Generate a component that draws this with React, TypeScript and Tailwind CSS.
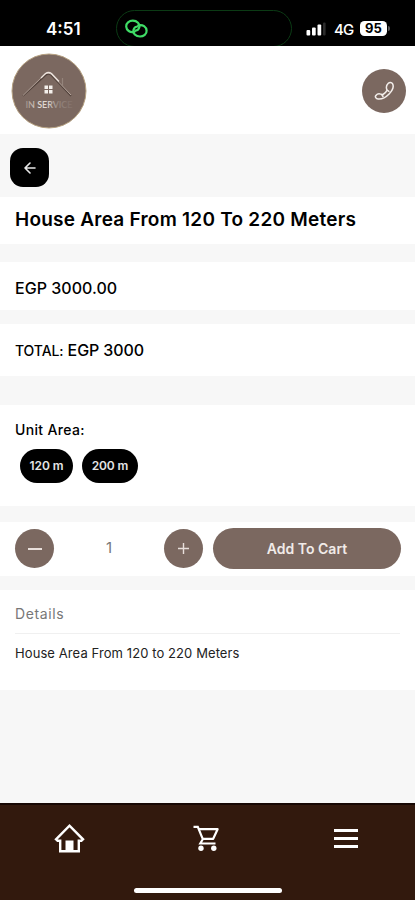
import type { ReactNode } from "react"

const round = "flex items-center justify-center rounded-full bg-[#7b6860] text-white"

function StatusBar() {
  return (
    <div className="relative h-[46px] bg-black text-white">
      <span className="absolute left-[46px] top-[18px] text-[17px] font-semibold leading-[22px]">4:51</span>
      <div className="absolute left-[116px] top-[10px] h-[37px] w-[176px] rounded-full border border-[#0b3a14] [clip-path:inset(0_0_1px_0)]" />
      <svg className="absolute left-[124px] top-[18px]" width="25" height="22" viewBox="0 0 25 22" fill="none" stroke="#3fdc66" strokeWidth="2.2" strokeLinecap="round">
        <path d="M10.500 13.800C6 15.200 2.400 12 2.200 8.600c-.3-3.400 3-5.900 6.600-5.900 4.300 0 7.400 3.300 6.600 6.300-.5 2-2 3.500-3.800 3.700" />
        <path d="M14.300 7.400c4.500-1.400 8.100 1.800 8.300 5.200.3 3.400-3 5.900-6.600 5.900-4.300 0-7.400-3.300-6.600-6.300.5-2 2-3.500 3.800-3.700" />
      </svg>
      <svg className="absolute left-[306px] top-[22px]" width="22" height="14" viewBox="0 0 22 14" fill="#fff">
        <rect x="0.500" y="8" width="3.700" height="5.500" rx="1" />
        <rect x="6" y="5.500" width="3.700" height="8" rx="1" />
        <rect x="11.500" y="2.500" width="3.700" height="11" rx="1" />
        <rect x="17" y="0.500" width="2.600" height="13" rx="1" fill="#2c2c2c" />
      </svg>
      <span className="absolute left-[334px] top-[19px] text-[15px] font-medium leading-[21px] tracking-[-0.8px]">4G</span>
      <span className="absolute left-[360px] top-[21px] h-[15px] w-[27px] rounded-[4.5px] bg-white text-center text-[13px] font-bold leading-[15px] text-black">95</span>
      <span className="absolute left-[388px] top-[26px] h-[5px] w-[2px] rounded-r bg-[#555]" />
    </div>
  )
}

function Logo() {
  return (
    <svg width="76" height="76" viewBox="0 0 76 76" fill="none">
      <defs>
        <linearGradient id="letters" x1="14" x2="60" y1="0" y2="0" gradientUnits="userSpaceOnUse">
          <stop stopColor="#9a8b84" />
          <stop offset=".3" stopColor="#e4dcd6" />
          <stop offset=".5" stopColor="#ded5cf" />
          <stop offset=".7" stopColor="#988a82" />
          <stop offset="1" stopColor="#83716a" />
        </linearGradient>
      </defs>
      <circle cx="38" cy="38" r="37" fill="#7b6860" stroke="#b6a181" />
      <path d="M12 43 35 22q2.500-2 5 0L60 43" stroke="#54443d" strokeWidth="1.500" />
      <path d="M12 42.500 34 21q3-2 6 0L60 42" stroke="#b3a39a" strokeWidth="1" />
      <path d="M30 25 34.500 20.500q3-2 6 0L48 28.500" stroke="#eee5df" strokeWidth="1.300" />
      <path d="M51.500 25v8.500" stroke="#94847b" strokeWidth="1.200" />
      <path d="M33.500 32.500H37V36h-3.500zM38 32.500h3.500V36H38zM33.500 37H37v3.500h-3.500zM38 37h3.500v3.500H38z" fill="#f4f0ec" />
      <text x="14.500" y="55" textLength="47" fontFamily="Lato, sans-serif" fontSize="9" fontWeight="600" fill="url(#letters)">IN SERVICE</text>
    </svg>
  )
}

function PhoneIcon() {
  return (
    <svg width="22" height="22" viewBox="0 0 22 22" fill="none" stroke="#f3eeeb" strokeWidth="1.500" strokeLinejoin="round" strokeLinecap="round">
      <path d="M15.300 3.200c1.300-1.200 3.300-1.100 4.200.4 1.500 2.700-.1 6.900-3.400 10.300-3.300 3.300-7.700 5.400-11 5-2.200-.2-3.400-2.100-2.200-3.500 1-1.200 3.300-1.800 4.800-1.300.9.300 1.500.8 2.300.4 1.600-.9 3-2.300 3.800-3.900.3-.8-.3-1.700-.4-2.900-.1-1.600.8-3.500 1.900-4.500Z" />
      <path d="M8.800 14.500l1.200 2M14.100 10.200l1.800 1.100" />
    </svg>
  )
}

function HomeIcon() {
  return (
    <svg width="31" height="31" viewBox="0 0 31 31" fill="none" stroke="#fff" strokeWidth="2.400">
      <path d="m2 16.300 13.500-13.600L29 16.300l-1.600 1.500h-2.600v10.400H6.200V17.800H3.600z" />
      <path d="M11.500 17.500h8V28h-8z" fill="#fff" stroke="none" />
    </svg>
  )
}

function CartIcon() {
  return (
    <svg width="27" height="27" viewBox="0 0 27 27" fill="none" stroke="#fff" strokeWidth="2.200">
      <path d="M.5 1.800h4.300l5 12.400-2.500 4.300h15.200" />
      <path d="M5.600 4.200h19l-4.400 9.600H9.600" strokeLinejoin="round" />
      <circle cx="8" cy="23.300" r="2.700" fill="#fff" stroke="none" />
      <circle cx="20.800" cy="23.300" r="2.700" fill="#fff" stroke="none" />
    </svg>
  )
}

function Chip({ children, className }: { children: ReactNode; className: string }) {
  return <button className={`h-[34px] rounded-full bg-black text-[12px] font-semibold tracking-[-0.1px] text-[#e4e4e4] ${className}`}>{children}</button>
}

export default function App() {
  return (
    <div className="flex h-[900px] w-[415px] flex-col overflow-hidden bg-[#f7f7f7] font-['Inter',sans-serif] text-black">
      <StatusBar />
      <header className="flex h-[88px] items-center justify-between bg-white pl-[11px] pr-[9px] pt-px">
        <Logo />
        <button className={`h-11 w-11 ${round}`}><PhoneIcon /></button>
      </header>

      <div className="flex h-[63px] items-center pl-[10px] pt-[4px]">
        <button className="flex h-[39px] w-[39px] items-center justify-center rounded-[13px] bg-black">
          <svg width="12" height="12" viewBox="0 0 12 12" fill="none" stroke="#e8e8e8" strokeWidth="1.600" strokeLinecap="round" strokeLinejoin="round">
            <path d="M11 6H1M6 1 1 6l5 5" />
          </svg>
        </button>
      </div>

      <section className="flex h-[47px] items-center bg-white px-[15px]">
        <h1 className="whitespace-nowrap text-[19px] font-semibold tracking-[0.24px]">House Area From 120 To 220 Meters</h1>
      </section>
      <section className="mt-[18px] flex h-12 items-center bg-white px-[15px] pt-[3px]">
        <p className="text-[16px] font-medium tracking-[0.03px]">EGP 3000.00</p>
      </section>
      <section className="mt-[14px] flex h-[52px] items-center bg-white px-[15px]">
        <p className="whitespace-nowrap text-[16px] font-medium leading-[23px] tracking-[-0.1px]"><span className="text-[14px]">TOTAL:</span> EGP 3000</p>
      </section>

      <section className="mt-[29px] h-[101px] bg-white px-[15px] pt-[15px]">
        <h2 className="text-[14px] font-medium leading-5 tracking-[0.35px]">Unit Area:</h2>
        <div className="mt-[9px] flex gap-[9px] pl-[5px]">
          <Chip className="w-[53px]">120 m</Chip>
          <Chip className="w-[56px]">200 m</Chip>
        </div>
      </section>

      <section className="mt-4 flex h-[54px] items-center bg-white pb-px pl-[15px] pr-[14px]">
        <button className={`h-[39px] w-[39px] ${round}`}>
          <span className="h-[2px] w-[14px] bg-[#e8dfdb]" />
        </button>
        <span className="flex-1 text-center text-[15px] text-[#777]">1</span>
        <button className={`h-[39px] w-[39px] ${round}`}>
          <svg width="11" height="11" viewBox="0 0 11 11" stroke="#e8dfdb" strokeWidth="1.400"><path d="M5.500 0v11M0 5.500h11" /></svg>
        </button>
        <button className="ml-[10px] h-[41px] w-[188px] rounded-full bg-[#7b6860] text-[14px] font-semibold text-[#f1ebe8]">Add To Cart</button>
      </section>

      <section className="mt-[14px] h-[100px] bg-white px-[15px] pt-[14px]">
        <h2 className="text-[14px] leading-5 tracking-[0.6px] text-[#777]">Details</h2>
        <p className="mt-[9px] whitespace-nowrap border-t border-[#f0f0f0] pt-[9px] text-[13px] leading-5 tracking-[0.09px] text-[#222]">House Area From 120 to 220 Meters</p>
      </section>

      <nav className="relative mt-auto flex h-[97px] items-start justify-between border-t-2 border-[#170804] bg-[#32190d] pl-[54px] pr-[57px] pt-[18px] text-white">
        <HomeIcon />
        <span className="mr-[6px] mt-[2px]"><CartIcon /></span>
        <svg className="mt-[6px]" width="24" height="20" viewBox="0 0 24 20" fill="#fff"><path d="M0 0h24v3H0zM0 8h24v3H0zM0 16h24v3H0z" /></svg>
        <span className="absolute bottom-[7px] left-[134px] h-[5px] w-[148px] rounded-full bg-white" />
      </nav>
    </div>
  )
}
